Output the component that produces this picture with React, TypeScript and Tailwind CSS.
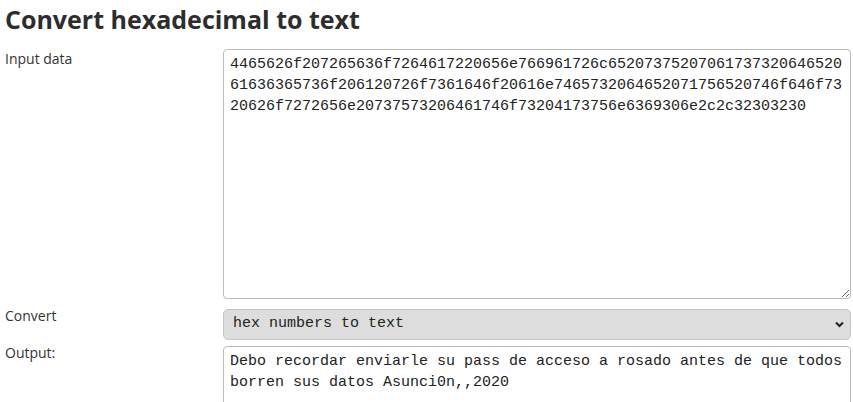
import { useState } from "react";

const HEX =
  "4465626f207265636f7264617220656e766961726c65207375207061737320646520" +
  "61636365736f206120726f7361646f20616e7465732064652071756520746f646f73" +
  "20626f7272656e20737573206461746f73204173756e6369306e2c2c32303230";

const OUTPUT = "Debo recordar enviarle su pass de acceso a rosado antes de que todos borren sus datos Asunci0n,,2020";

export default function App() {
  const [input, setInput] = useState(HEX);
  const [mode, setMode] = useState("hex2text");

  return (
    <div className="min-h-screen bg-white pl-[5px] pr-[2px] text-[#333] font-['Open_Sans',sans-serif]">
      <h1 className="pt-[3px] text-[25px] leading-[32px] font-bold text-[#2d2d2d]">
        Convert hexadecimal to text
      </h1>

      <div className="mt-[14px] grid grid-cols-[218px_1fr] gap-y-[10px] text-[14px]">
        <label className="leading-[20px]">Input data</label>
        <textarea
          value={input}
          onChange={(e) => setInput(e.target.value)}
          className="h-[250px] w-full resize-y rounded-[4px] border border-[#bbb] px-[6px] py-[4px] font-['Liberation_Mono',monospace] text-[15px] leading-[21px] text-[#222] outline-none"
        />

        <label className="-mt-[3px] leading-[20px]">Convert</label>
        <div className="relative">
          <select
            value={mode}
            onChange={(e) => setMode(e.target.value)}
            className="h-[31px] w-full appearance-none rounded-[5px] border border-[#c4c4c4] bg-[#ddd] pl-[9px] font-['Liberation_Mono',monospace] text-[15px] text-[#222] outline-none"
          >
            <option value="hex2text">hex numbers to text</option>
            <option value="text2hex">text to hex numbers</option>
          </select>
          <svg
            className="pointer-events-none absolute right-[7px] top-[12px]"
            width="9"
            height="7"
            viewBox="0 0 9 7"
          >
            <path d="M1 1.5 L4.5 5 L8 1.5" fill="none" stroke="#222" strokeWidth="2" />
          </svg>
        </div>

        <label className="-mt-[7px] leading-[20px]">Output:</label>
        <textarea
          readOnly
          value={OUTPUT}
          className="-mt-[4px] h-[120px] w-full resize-y rounded-[4px] border border-[#bbb] px-[6px] py-[4px] font-['Liberation_Mono',monospace] text-[15px] leading-[21px] text-[#222] outline-none"
        />
      </div>
    </div>
  );
}
